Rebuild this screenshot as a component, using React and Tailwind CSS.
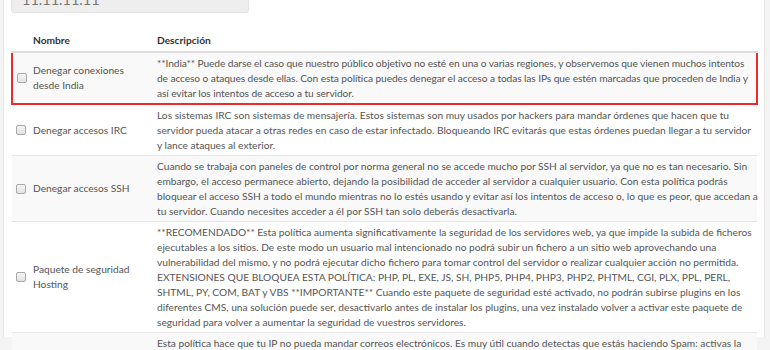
import React from 'react'

// Description lines follow the breaks of the original panel width
const rows = [
  {
    name: 'Denegar conexiones desde India',
    marked: true,
    lines: [
      '**India** Puede darse el caso que nuestro público objetivo no esté en una o varias regiones, y observemos que vienen muchos intentos',
      'de acceso o ataques desde ellas. Con esta política puedes denegar el acceso a todas las IPs que estén marcadas que proceden de India y',
      'así evitar los intentos de acceso a tu servidor.',
    ],
  },
  {
    name: 'Denegar accesos IRC',
    lines: [
      'Los sistemas IRC son sistemas de mensajería. Estos sistemas son muy usados por hackers para mandar órdenes que hacen que tu',
      'servidor pueda atacar a otras redes en caso de estar infectado. Bloqueando IRC evitarás que estas órdenes puedan llegar a tu servidor',
      'y lance ataques al exterior.',
    ],
  },
  {
    name: 'Denegar accesos SSH',
    lines: [
      'Cuando se trabaja con paneles de control por norma general no se accede mucho por SSH al servidor, ya que no es tan necesario. Sin',
      'embargo, el acceso permanece abierto, dejando la posibilidad de acceder al servidor a cualquier usuario. Con esta política podrás',
      'bloquear el acceso SSH a todo el mundo mientras no lo estés usando y evitar así los intentos de acceso o, lo que es peor, que accedan a',
      'tu servidor. Cuando necesites acceder a él por SSH tan solo deberás desactivarla.',
    ],
  },
  {
    name: 'Paquete de seguridad Hosting',
    lines: [
      '**RECOMENDADO** Esta política aumenta significativamente la seguridad de los servidores web, ya que impide la subida de ficheros',
      'ejecutables a los sitios. De este modo un usuario mal intencionado no podrá subir un fichero a un sitio web aprovechando una',
      'vulnerabilidad del mismo, y no podrá ejecutar dicho fichero para tomar control del servidor o realizar cualquier acción no permitida.',
      'EXTENSIONES QUE BLOQUEA ESTA POLÍTICA: PHP, PL, EXE, JS, SH, PHP5, PHP4, PHP3, PHP2, PHTML, CGI, PLX, PPL, PERL,',
      'SHTML, PY, COM, BAT y VBS **IMPORTANTE** Cuando este paquete de seguridad esté activado, no podrán subirse plugins en los',
      'diferentes CMS, una solución puede ser, desactivarlo antes de instalar los plugins, una vez instalado volver a activar este paquete de',
      'seguridad para volver a aumentar la seguridad de vuestros servidores.',
    ],
  },
  {
    name: 'Bloquear envío de correo',
    lines: [
      'Esta política hace que tu IP no pueda mandar correos electrónicos. Es muy útil cuando detectas que estás haciendo Spam: activas la',
      'política mientras localizas el origen del problema y evitas que tu IP acabe en listas negras. Cuando hayas solucionado el',
      'problema podrás desactivarla de nuevo.',
    ],
  },
]

function Checkbox() {
  return (
    <span className="block w-[10px] h-[10px] rounded-[2px] border border-[#a9a9a9] bg-gradient-to-b from-[#f4f4f4] to-[#e2e2e2]" />
  )
}

export default function App() {
  return (
    <div
      className="w-[770px] h-[350px] overflow-hidden bg-[#f4f4f4] pl-[3px] pr-[5px]"
      style={{ fontFamily: 'Lato, "Open Sans", sans-serif' }}
    >
      <div className="h-full bg-white border-x border-[#e4e4e4] pl-[7px] pr-[6px]">
        {/* IP field, scrolled mostly out of view */}
        <div className="-mt-[13px] w-[238px] h-[26px] bg-[#eeeeee] border border-[#e2e2e2] rounded-[3px] pl-[10px] pb-[5px] flex items-end text-[14.5px] leading-none text-[#777]">
          11.11.11.11
        </div>

        <table className="w-full table-fixed mt-[18px] text-[10.2px] leading-[15px] text-[#555]">
          <thead>
            <tr className="border-b-2 border-[#dddddd] text-left text-[#333]">
              <th className="w-[17px] p-0" />
              <th className="w-[124px] px-[4px] pt-[2px] pb-[3px] font-bold">Nombre</th>
              <th className="px-[4px] pt-[2px] pb-[3px] font-bold">Descripción</th>
            </tr>
          </thead>
          <tbody>
            {rows.map((r, i) => (
              <tr
                key={r.name}
                className={
                  (i % 2 === 0 ? 'bg-[#f9f9f9] ' : 'bg-white ') +
                  (r.marked ? 'border-2 border-[#ee2b2b]' : 'border-t border-[#e6e6e6]')
                }
              >
                <td className="align-middle pl-[4px] pr-0">
                  <Checkbox />
                </td>
                <td className="align-middle px-[4px] py-[3px]">{r.name}</td>
                <td className={'align-top px-[4px] pt-[3px] pb-[2px]' + (r.marked ? ' tracking-[-0.09px]' : '')}>
                  {r.lines.map((l) => (
                    <span key={l} className="block whitespace-nowrap">{l}</span>
                  ))}
                </td>
              </tr>
            ))}
          </tbody>
        </table>
      </div>
    </div>
  )
}
